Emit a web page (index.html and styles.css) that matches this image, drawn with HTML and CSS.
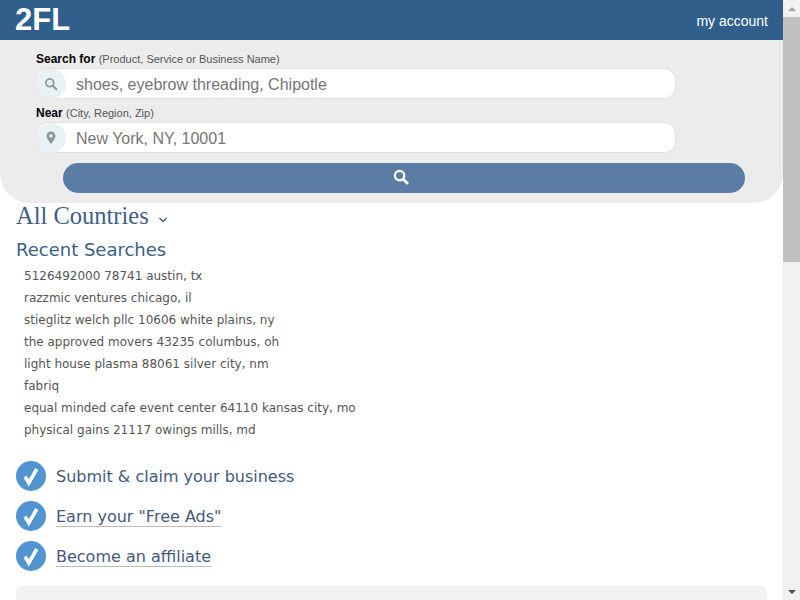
FILE: index.html
```html
<!DOCTYPE html>
<html lang="en">
<head>
  <meta charset="UTF-8">
  <meta name="viewport" content="width=device-width, initial-scale=1.0">
  <title>2FL</title>
  <link rel="stylesheet" href="styles.css">
</head>
<body>

  <div class="page">
    <header class="top-bar">
      <a class="logo" href="#">2FL</a>
      <a class="account-link" href="#">my account</a>
    </header>

    <form class="search-panel">
      <label class="field-label" for="what">Search for <small>(Product, Service or Business Name)</small></label>
      <div class="field">
        <span class="field-icon">
          <svg width="14" height="14" viewBox="0 0 14 14"><circle cx="5.800" cy="5.800" r="3.900" fill="none" stroke="#8a9ba3" stroke-width="1.800"/><path d="M8.800 8.800 12.300 12.300" stroke="#8a9ba3" stroke-width="2.200" stroke-linecap="round"/></svg>
        </span>
        <input id="what" type="text" placeholder="shoes, eyebrow threading, Chipotle">
      </div>
      <label class="field-label field-label-near" for="where">Near <small>(City, Region, Zip)</small></label>
      <div class="field">
        <span class="field-icon">
          <svg width="10" height="14" viewBox="0 0 10 14"><path fill-rule="evenodd" fill="#8a9ba3" d="M5 .5C2.400 .5 .6 2.400 .6 4.900 .6 7.600 3.600 11 5 13c1.400-2 4.400-5.400 4.400-8.100C9.400 2.400 7.600 .5 5 .5ZM5 3.200a1.700 1.700 0 1 1 0 3.400 1.700 1.700 0 0 1 0-3.400Z"/></svg>
        </span>
        <input id="where" type="text" placeholder="New York, NY, 10001">
      </div>
      <button class="search-button" type="button" aria-label="Search">
        <svg width="16" height="16" viewBox="0 0 17 17"><circle cx="7" cy="7" r="5" fill="none" stroke="#fff" stroke-width="2.400"/><path d="M10.800 10.800 15 15" stroke="#fff" stroke-width="3" stroke-linecap="round"/></svg>
      </button>
    </form>

    <main class="content">
      <h1 class="country-title">All Countries
        <svg class="chevron" width="10" height="6" viewBox="0 0 10 6"><path d="M1.500 1 5 4.500 8.500 1" fill="none" stroke="#44576a" stroke-width="1.300"/></svg>
      </h1>

      <h2 class="section-title">Recent Searches</h2>
      <ul class="recent-list">
        <li>5126492000 78741 austin, tx</li>
        <li>razzmic ventures chicago, il</li>
        <li>stieglitz welch pllc 10606 white plains, ny</li>
        <li>the approved movers 43235 columbus, oh</li>
        <li>light house plasma 88061 silver city, nm</li>
        <li>fabriq</li>
        <li>equal minded cafe event center 64110 kansas city, mo</li>
        <li>physical gains 21117 owings mills, md</li>
      </ul>

      <ul class="perk-list">
        <li>
          <svg class="check" width="30" height="30" viewBox="0 0 30 30"><circle cx="15" cy="15" r="15" fill="#5194d0"/><path d="M9 15.500 12.800 22 20.800 8" fill="none" stroke="#fff" stroke-width="3.600"/></svg>
          <span>Submit &amp; claim your business</span>
        </li>
        <li>
          <svg class="check" width="30" height="30" viewBox="0 0 30 30"><circle cx="15" cy="15" r="15" fill="#5194d0"/><path d="M9 15.500 12.800 22 20.800 8" fill="none" stroke="#fff" stroke-width="3.600"/></svg>
          <a href="#">Earn your "Free Ads"</a>
        </li>
        <li>
          <svg class="check" width="30" height="30" viewBox="0 0 30 30"><circle cx="15" cy="15" r="15" fill="#5194d0"/><path d="M9 15.500 12.800 22 20.800 8" fill="none" stroke="#fff" stroke-width="3.600"/></svg>
          <a href="#">Become an affiliate</a>
        </li>
      </ul>

      <div class="bottom-card"></div>
    </main>
  </div>

  <div class="scrollbar" aria-hidden="true">
    <span class="scroll-arrow scroll-arrow-up"></span>
    <span class="scroll-thumb"></span>
    <span class="scroll-track"></span>
    <span class="scroll-arrow scroll-arrow-down"></span>
  </div>

</body>
</html>
```

FILE: styles.css
```css
* {
  box-sizing: border-box;
  margin: 0;
  padding: 0;
}

body {
  display: flex;
  height: 100vh;
  overflow: hidden;
  font-family: 'DejaVu Sans', Verdana, sans-serif;
  background: #fff;
  color: #555;
}

.page {
  flex: 1;
  min-width: 0;
  height: 100%;
  overflow: hidden;
}

/* drawn by hand, the screenshot browser hides its own */
.scrollbar {
  display: flex;
  flex-direction: column;
  flex: none;
  width: 17px;
  height: 100%;
  background: #f1f1f1;
}

.scroll-arrow {
  display: flex;
  align-items: center;
  justify-content: center;
  flex: none;
  height: 17px;
}

.scroll-arrow::before {
  content: "";
  border-left: 4px solid transparent;
  border-right: 4px solid transparent;
}

.scroll-arrow-up::before {
  border-bottom: 4px solid #a3a3a3;
}

.scroll-arrow-down::before {
  border-top: 4px solid #505050;
}

.scroll-thumb {
  flex: none;
  height: 245px;
  background: #c1c1c1;
}

.scroll-track {
  flex: 1;
}

.top-bar {
  display: flex;
  align-items: center;
  justify-content: space-between;
  height: 40px;
  padding: 0 15px;
  background: #2f5f8a;
}

.logo {
  font-family: 'Liberation Sans', Arial, sans-serif;
  font-size: 31px;
  font-weight: 700;
  color: #fff;
  text-decoration: none;
}

.account-link {
  padding-top: 2px;
  font-family: 'Liberation Sans', Arial, sans-serif;
  font-size: 14px;
  color: #fff;
  text-decoration: none;
}

.search-panel {
  height: 163px;
  padding: 11px 107px 0 36px;
  background: #ececec;
  border-radius: 0 0 30px 30px;
}

.field-label {
  display: block;
  height: 17px;
  font-family: 'Liberation Sans', Arial, sans-serif;
  font-size: 12px;
  line-height: 16px;
  font-weight: 700;
  color: #000;
}

.field-label small {
  font-size: 11px;
  font-weight: 400;
  color: #555;
}

.field-label-near {
  margin-top: 6px;
}

.field {
  display: flex;
  align-items: center;
  height: 31px;
  background: #fff;
  border: 1px solid #e1e1e1;
  border-radius: 12px;
}

.field-icon {
  display: flex;
  align-items: center;
  justify-content: center;
  flex: none;
  width: 30px;
  height: 30px;
  margin-left: -1px;
  background: #e8f1f3;
  border-radius: 50%;
}

.field input {
  flex: 1;
  min-width: 0;
  height: 100%;
  padding: 2px 0 0 10px;
  font-family: 'Liberation Sans', Arial, sans-serif;
  font-size: 16px;
  background: transparent;
  border: none;
  outline: none;
}

.field input::placeholder {
  color: #757575;
}

.search-button {
  display: flex;
  align-items: center;
  justify-content: center;
  width: 682px;
  height: 30px;
  margin: 10px 0 0 27px;
  padding: 0 6px 2px 0;
  background: #5a7ca5;
  border: none;
  border-radius: 15px;
}

.content {
  padding: 0 16px;
}

.country-title {
  font-family: 'Liberation Serif', Georgia, serif;
  font-size: 24.500px;
  line-height: 26px;
  font-weight: 400;
  color: #3d5f88;
}

.chevron {
  margin-left: 3px;
  margin-bottom: 1px;
}

.section-title {
  margin-top: 10px;
  font-size: 18px;
  line-height: 22px;
  font-weight: 400;
  color: #3d5f88;
}

.recent-list {
  margin-top: 4px;
  padding-left: 8px;
  list-style: none;
  font-size: 12px;
  line-height: 22px;
}

.perk-list {
  margin-top: 20px;
  list-style: none;
  font-size: 16px;
}

.perk-list li {
  display: flex;
  align-items: center;
  gap: 10px;
  height: 30px;
  margin-bottom: 10px;
  color: #44597d;
}

.perk-list a {
  margin-top: 1px;
  color: #44597d;
  text-decoration: none;
  border-bottom: 1px solid #bbb;
}

.check {
  flex: none;
}

.bottom-card {
  height: 780px;
  margin-top: 15px;
  background: #f2f2f2;
  border-radius: 6px;
}
```
